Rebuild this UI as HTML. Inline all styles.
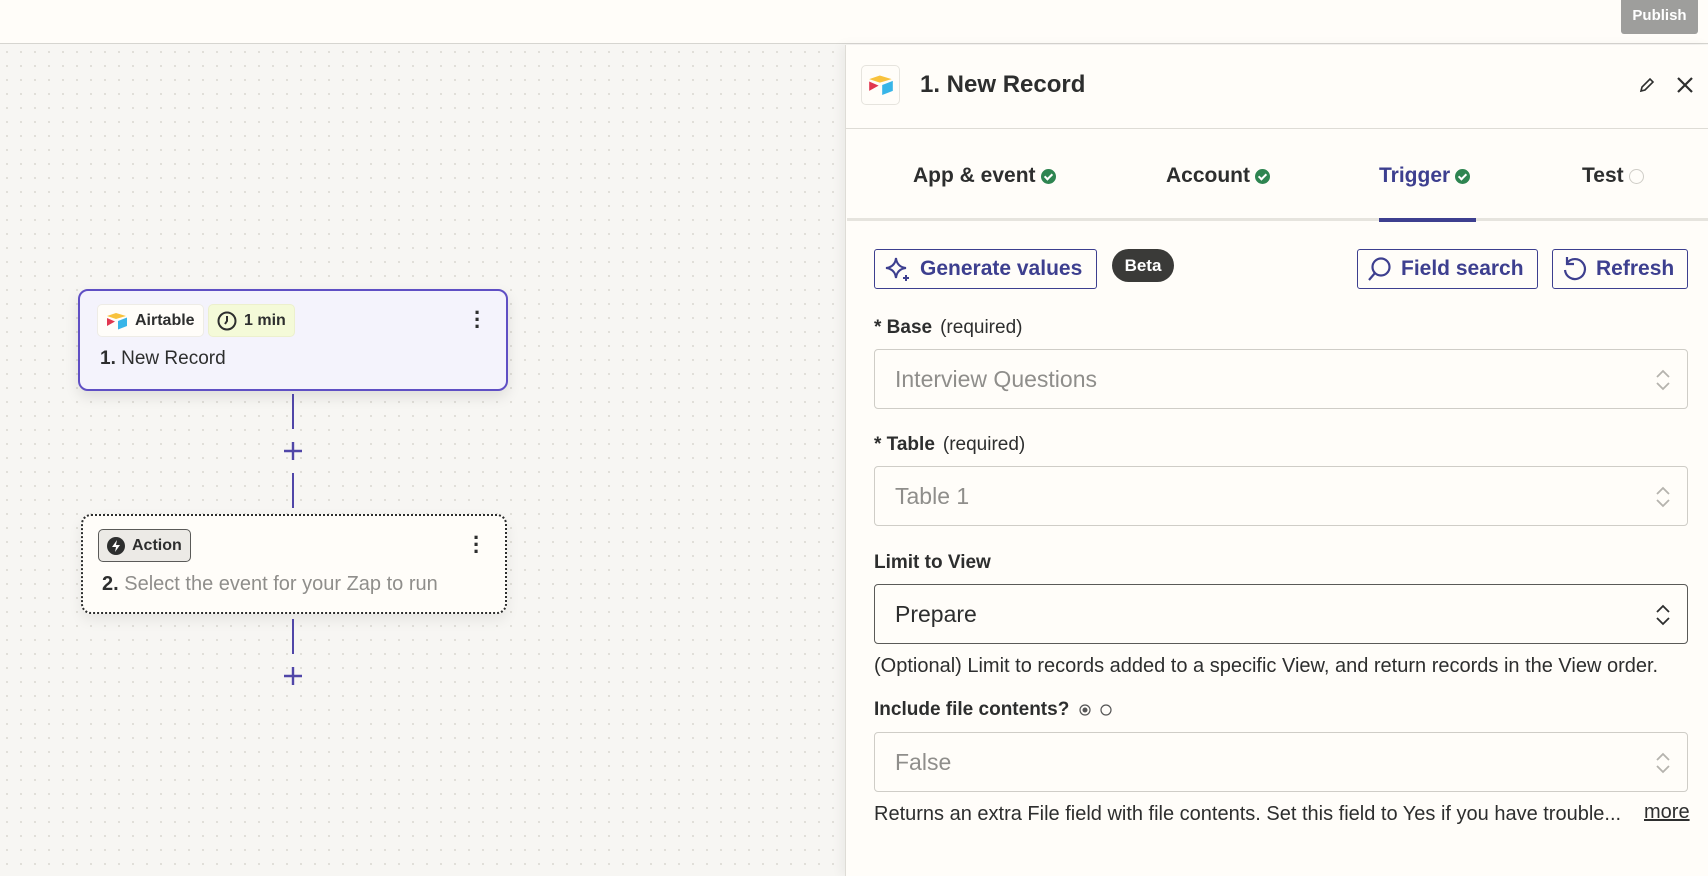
<!DOCTYPE html>
<html><head><meta charset="utf-8"><style>
*{box-sizing:border-box;margin:0;padding:0}
body{width:1708px;height:876px;overflow:hidden;position:relative;font-family:"Liberation Sans",sans-serif;background:#f7f6f3;color:#2d2e2e}
.abs{position:absolute}
#top{left:0;top:0;width:1708px;height:44px;background:#fffdf9;border-bottom:1px solid #d6d5d0}
#pub{left:1621px;top:0;width:77px;height:34px;background:#9e9e9c;color:#fff;font-size:15px;font-weight:bold;text-align:center;line-height:31px;border-radius:0 0 3px 3px}
#canvas{left:0;top:45px;width:845px;height:831px;background-color:#f7f6f3;background-image:radial-gradient(circle,#dddbd5 0.9px,transparent 1.2px);background-size:14px 14px}
#panel{left:845px;top:45px;width:863px;height:831px;background:#fffdf9;border-left:1px solid #dedcd6;box-shadow:-4px 0 10px rgba(0,0,0,.05)}
.card{background:#fffdf9;border-radius:10px}
.chip{font-size:16px;font-weight:bold;display:flex;align-items:center;gap:7px;padding:0 8px;border-radius:5px}
.line{width:2px;background:#5046a8;left:292px}
.plus{left:283px}
.tab{top:162px;font-size:21px;font-weight:bold;display:flex;align-items:center;gap:5px}
.ck{width:15px;height:15px;border-radius:50%;background:#2e8551;display:inline-block;position:relative}
.ck:after{content:"";position:absolute;left:5px;top:3px;width:3px;height:6px;border:solid #fff;border-width:0 2px 2px 0;transform:rotate(45deg)}
.btn{top:249px;height:40px;border:1px solid #3d3f8f;border-radius:3px;color:#3d3f8f;font-size:21px;font-weight:bold;display:flex;align-items:center;gap:7px;padding-left:8px;background:#fffdf9}
.lbl{left:874px;font-size:19px;font-weight:bold;color:#2d2e2e}
.lbl span{font-weight:normal;margin-left:8px}
.inp{left:874px;width:814px;height:60px;border:1px solid #cfcdc7;border-radius:4px;font-size:23px;color:#8f8e8b;padding-left:20px;line-height:58px;background:#fffdf9}
.inp svg{position:absolute;right:16px;top:18px}
.help{left:874px;font-size:20px;color:#2d2e2e}
</style></head><body>
<div id="top" class="abs"></div>
<div id="pub" class="abs">Publish</div>
<div id="canvas" class="abs"></div>

<div class="abs card" style="left:78px;top:289px;width:430px;height:102px;border:2.5px solid #5f4fc4;background:#f4f3fc;box-shadow:0 6px 14px rgba(0,0,0,.1)"></div>
<div class="abs chip" style="left:97px;top:304px;height:33px;background:#fffdf9;border:1px solid #eeece6">
<svg width="22" height="18" viewBox="0 0 22 18"><path d="M10 1 L20 4 L10 7 L1 4Z" fill="#f8c23c"/><path d="M12 9 L21 5.5 V14 L12 17.5Z" fill="#37b5e8"/><path d="M1 6 L9 9.5 L1 14Z" fill="#e1364f"/></svg>Airtable</div>
<div class="abs chip" style="left:208px;top:304px;height:33px;background:#f4fad8;border:1px solid #ecf0cd">
<svg width="20" height="20" viewBox="0 0 20 20"><circle cx="10" cy="10" r="8.5" fill="none" stroke="#2d2e2e" stroke-width="2"/><path d="M10 5v5l-2 3" fill="none" stroke="#2d2e2e" stroke-width="2"/></svg>1 min</div>
<div class="abs" style="left:100px;top:348px;font-size:19px;color:#2d2e2e"><b>1.</b> New Record</div>
<div class="abs" style="left:474px;top:309px;font-size:22px;font-weight:bold;line-height:7px;width:6px">·<br>·<br>·</div>

<div class="abs line" style="top:394px;height:35px"></div>
<svg class="abs plus" style="top:441px" width="20" height="20" viewBox="0 0 20 20"><path d="M10 1v18M1 10h18" stroke="#5046a8" stroke-width="2.4"/></svg>
<div class="abs line" style="top:473px;height:35px"></div>

<div class="abs card" style="left:81px;top:514px;width:426px;height:100px;border:2px dotted #2d2e2e;box-shadow:0 6px 14px rgba(0,0,0,.07)"></div>
<div class="abs chip" style="left:98px;top:529px;height:33px;background:#eceae6;border:1px solid #5a5a58">
<svg width="18" height="18" viewBox="0 0 18 18"><circle cx="9" cy="9" r="9" fill="#2d2e2e"/><path d="M10 3 L5 10 H9 L8 15 L13 8 H9Z" fill="#fff"/></svg>Action</div>
<div class="abs" style="left:102px;top:573px;font-size:20px;color:#8f8e8b"><b style="color:#2d2e2e">2.</b> Select the event for your Zap to run</div>
<div class="abs" style="left:473px;top:534px;font-size:22px;font-weight:bold;line-height:7px;width:6px">·<br>·<br>·</div>
<div class="abs line" style="top:619px;height:35px"></div>
<svg class="abs plus" style="top:666px" width="20" height="20" viewBox="0 0 20 20"><path d="M10 1v18M1 10h18" stroke="#5046a8" stroke-width="2.4"/></svg>

<div id="panel" class="abs"></div>
<div class="abs" style="left:861px;top:65px;width:39px;height:40px;border:1px solid #e6e4de;border-radius:5px;background:#fffdf9"></div>
<svg class="abs" style="left:868px;top:74px" width="26" height="22" viewBox="0 0 22 18"><path d="M10 1 L20 4 L10 7 L1 4Z" fill="#f8c23c"/><path d="M12 9 L21 5.5 V14 L12 17.5Z" fill="#37b5e8"/><path d="M1 6 L9 9.5 L1 14Z" fill="#e1364f"/></svg>
<div class="abs" style="left:920px;top:71px;font-size:24px;font-weight:bold">1. New Record</div>
<svg class="abs" style="left:1638px;top:76px" width="18" height="18" viewBox="0 0 18 18"><path d="M3 15 L4 11 L12 3 L15 6 L7 14Z" fill="none" stroke="#2d2e2e" stroke-width="1.6"/></svg>
<svg class="abs" style="left:1676px;top:76px" width="18" height="18" viewBox="0 0 18 18"><path d="M2 2 L16 16 M16 2 L2 16" stroke="#2d2e2e" stroke-width="2.2"/></svg>
<div class="abs" style="left:846px;top:128px;width:862px;height:1px;background:#dedcd6"></div>

<div class="abs tab" style="left:913px;top:164px">App &amp; event<span class="ck"></span></div>
<div class="abs tab" style="left:1166px;top:164px">Account<span class="ck"></span></div>
<div class="abs tab" style="left:1379px;top:164px;color:#3d3f8f">Trigger<span class="ck"></span></div>
<div class="abs tab" style="left:1582px;top:164px">Test<span style="width:15px;height:15px;border-radius:50%;border:1.5px solid #cfcdc7;display:inline-block"></span></div>
<div class="abs" style="left:847px;top:218px;width:861px;height:3px;background:#e6e4de"></div>
<div class="abs" style="left:1379px;top:218px;width:97px;height:4px;background:#3d3f8f"></div>

<div class="abs btn" style="left:874px;width:223px"><svg width="30" height="30" viewBox="0 0 30 30"><path d="M13 4 Q14 13 23 14 Q14 15 13 24 Q12 15 3 14 Q12 13 13 4Z" fill="none" stroke="#3d3f8f" stroke-width="2"/><path d="M23 21v6M20 24h6" stroke="#3d3f8f" stroke-width="2"/></svg>Generate values</div>
<div class="abs" style="left:1112px;top:249px;width:62px;height:33px;border-radius:17px;background:#3a3a38;color:#fff;font-weight:bold;font-size:17px;text-align:center;line-height:33px">Beta</div>
<div class="abs btn" style="left:1357px;width:181px"><svg width="28" height="28" viewBox="0 0 28 28"><circle cx="15" cy="12" r="8.5" fill="none" stroke="#3d3f8f" stroke-width="2.2"/><path d="M9 18 L3 25" stroke="#3d3f8f" stroke-width="2.2"/></svg>Field search</div>
<div class="abs btn" style="left:1552px;width:136px"><svg width="28" height="28" viewBox="0 0 28 28"><path d="M6 8 A10 10 0 1 1 4 15" fill="none" stroke="#3d3f8f" stroke-width="2.2"/><path d="M6 2 V9 H13" fill="none" stroke="#3d3f8f" stroke-width="2.2"/></svg>Refresh</div>

<div class="abs lbl" style="top:317px">* Base<span>(required)</span></div>
<div class="abs inp" style="top:349px">Interview Questions<svg width="16" height="24" viewBox="0 0 16 24"><path d="M2 9 L8 3 L14 9 M2 15 L8 21 L14 15" fill="none" stroke="#b5b3ae" stroke-width="1.8"/></svg></div>
<div class="abs lbl" style="top:434px">* Table<span>(required)</span></div>
<div class="abs inp" style="top:466px">Table 1<svg width="16" height="24" viewBox="0 0 16 24"><path d="M2 9 L8 3 L14 9 M2 15 L8 21 L14 15" fill="none" stroke="#b5b3ae" stroke-width="1.8"/></svg></div>
<div class="abs lbl" style="top:552px">Limit to View</div>
<div class="abs inp" style="top:584px;border-color:#5a5a58;color:#2d2e2e">Prepare<svg width="16" height="24" viewBox="0 0 16 24"><path d="M2 9 L8 3 L14 9 M2 15 L8 21 L14 15" fill="none" stroke="#2d2e2e" stroke-width="1.8"/></svg></div>
<div class="abs help" style="top:655px">(Optional) Limit to records added to a specific View, and return records in the View order.</div>
<div class="abs lbl" style="top:699px">Include file contents?</div>
<svg class="abs" style="left:1078px;top:703px" width="36" height="14" viewBox="0 0 36 14"><circle cx="7" cy="7" r="5" fill="none" stroke="#555" stroke-width="1.2"/><circle cx="7" cy="7" r="2.5" fill="#555"/><circle cx="28" cy="7" r="5" fill="none" stroke="#555" stroke-width="1.2"/></svg>
<div class="abs inp" style="top:732px">False<svg width="16" height="24" viewBox="0 0 16 24"><path d="M2 9 L8 3 L14 9 M2 15 L8 21 L14 15" fill="none" stroke="#b5b3ae" stroke-width="1.8"/></svg></div>
<div class="abs help" style="top:803px">Returns an extra File field with file contents. Set this field to Yes if you have trouble...</div>
<div class="abs help" style="left:1644px;top:801px;text-decoration:underline">more</div>
</body></html>
